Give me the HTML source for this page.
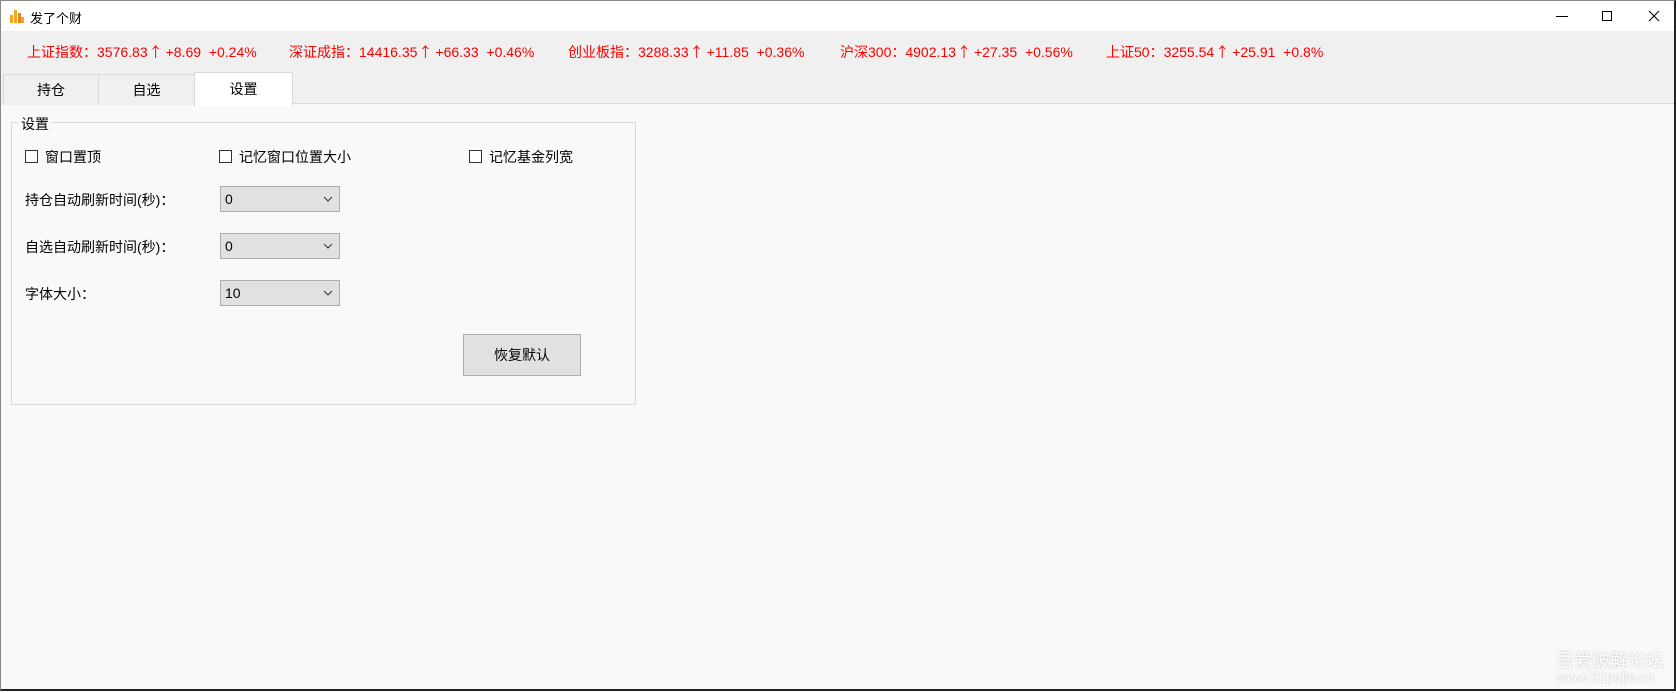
<!DOCTYPE html>
<html><head><meta charset="utf-8"><style>
*{margin:0;padding:0;box-sizing:border-box}
body{width:1676px;height:693px;overflow:hidden;background:#fff;font-family:"Liberation Sans","Microsoft YaHei","Noto Sans CJK SC",sans-serif;font-size:14px;color:#000;position:relative}
.abs{position:absolute;white-space:nowrap}
.win{position:absolute;left:0;top:0;width:1676px;height:691px;border:1px solid #888;border-right:2px solid #222;border-bottom:2px solid #222;background:#f9f9f9}
.title{position:absolute;left:0;top:0;width:100%;height:30px;background:#fff}
.ticker{position:absolute;left:0;top:30px;width:100%;height:73px;background:#f0f0f0;border-bottom:1px solid #d9d9d9}
.t{color:#f00;font-size:14px;top:51px;transform:translateY(-50%)}
.t b{font-weight:normal;font-family:"Noto Sans CJK SC",sans-serif;margin:0 3px 0 1px}
.tab{position:absolute;top:73px;height:31px;border:1px solid #d9d9d9;border-bottom:none;background:#f0f0f0;text-align:center;line-height:30px;font-size:14px}
.cb{width:13px;height:13px;border:1px solid #333;background:#fff}
.combo{position:absolute;left:219px;width:120px;height:26px;border:1px solid #adadad;background:#e1e1e1;padding-left:4px;line-height:24px;font-size:14px}
.combo svg{position:absolute;right:6px;top:9px}
</style></head><body>
<div class="win">
<div class="title">
 <svg class="abs" style="left:9px;top:7px" width="14" height="15" viewBox="0 0 14 15"><rect x="0" y="7" width="3" height="8" fill="#f5a623"/><rect x="4" y="2" width="3" height="13" fill="#f5a623"/><rect x="8" y="5" width="3" height="10" fill="#e8851a"/><rect x="11" y="9" width="3" height="6" fill="#f5a623"/></svg>
 <div class="abs" style="left:29px;top:7px;font-size:13px">发了个财</div>
 <div class="abs" style="left:1555px;top:15px;width:12px;height:1px;background:#000"></div>
 <div class="abs" style="left:1601px;top:10px;width:10px;height:10px;border:1px solid #000"></div>
 <svg class="abs" style="left:1647px;top:9px" width="12" height="12"><path d="M1 1L11 11M11 1L1 11" stroke="#000" stroke-width="1"/></svg>
</div>
<div class="ticker"></div>
<div class="abs t" style="left:26px">上证指数：3576.83<b>↑</b>+8.69&nbsp; +0.24%</div>
<div class="abs t" style="left:288px">深证成指：14416.35<b>↑</b>+66.33&nbsp; +0.46%</div>
<div class="abs t" style="left:567px">创业板指：3288.33<b>↑</b>+11.85&nbsp; +0.36%</div>
<div class="abs t" style="left:839px">沪深300：4902.13<b>↑</b>+27.35&nbsp; +0.56%</div>
<div class="abs t" style="left:1105px">上证50：3255.54<b>↑</b>+25.91&nbsp; +0.8%</div>
<div class="tab" style="left:2px;width:96px">持仓</div>
<div class="tab" style="left:97px;width:97px">自选</div>
<div class="tab" style="left:193px;top:71px;height:34px;width:99px;background:#fff;line-height:32px">设置</div>
<div class="abs" style="left:10px;top:121px;width:625px;height:283px;border:1px solid #d9d9d9"></div>
<div class="abs" style="left:18px;top:113px;background:#f9f9f9;padding:0 2px;font-size:14px">设置</div>
<div class="abs cb" style="left:24px;top:149px"></div><div class="abs" style="left:44px;top:146px">窗口置顶</div>
<div class="abs cb" style="left:218px;top:149px"></div><div class="abs" style="left:238px;top:146px">记忆窗口位置大小</div>
<div class="abs cb" style="left:468px;top:149px"></div><div class="abs" style="left:488px;top:146px">记忆基金列宽</div>
<div class="abs" style="left:24px;top:189px">持仓自动刷新时间(秒)：</div>
<div class="abs" style="left:24px;top:236px">自选自动刷新时间(秒)：</div>
<div class="abs" style="left:24px;top:283px">字体大小：</div>
<div class="combo" style="top:185px">0<svg width="10" height="6"><path d="M1 1L5 5L9 1" stroke="#333" fill="none"/></svg></div>
<div class="combo" style="top:232px">0<svg width="10" height="6"><path d="M1 1L5 5L9 1" stroke="#333" fill="none"/></svg></div>
<div class="combo" style="top:279px">10<svg width="10" height="6"><path d="M1 1L5 5L9 1" stroke="#333" fill="none"/></svg></div>
<div class="abs" style="left:462px;top:333px;width:118px;height:42px;border:1px solid #adadad;background:#e1e1e1;text-align:center;line-height:40px">恢复默认</div>
<div class="abs" style="left:1555px;top:646px;font-size:18px;color:#fff;text-shadow:0 0 2px #bbb">吾爱破解论坛</div>
<div class="abs" style="left:1556px;top:668px;font-size:14px;color:#fff;text-shadow:0 0 2px #bbb">www.52pojie.cn</div>
</div>
</body></html>
